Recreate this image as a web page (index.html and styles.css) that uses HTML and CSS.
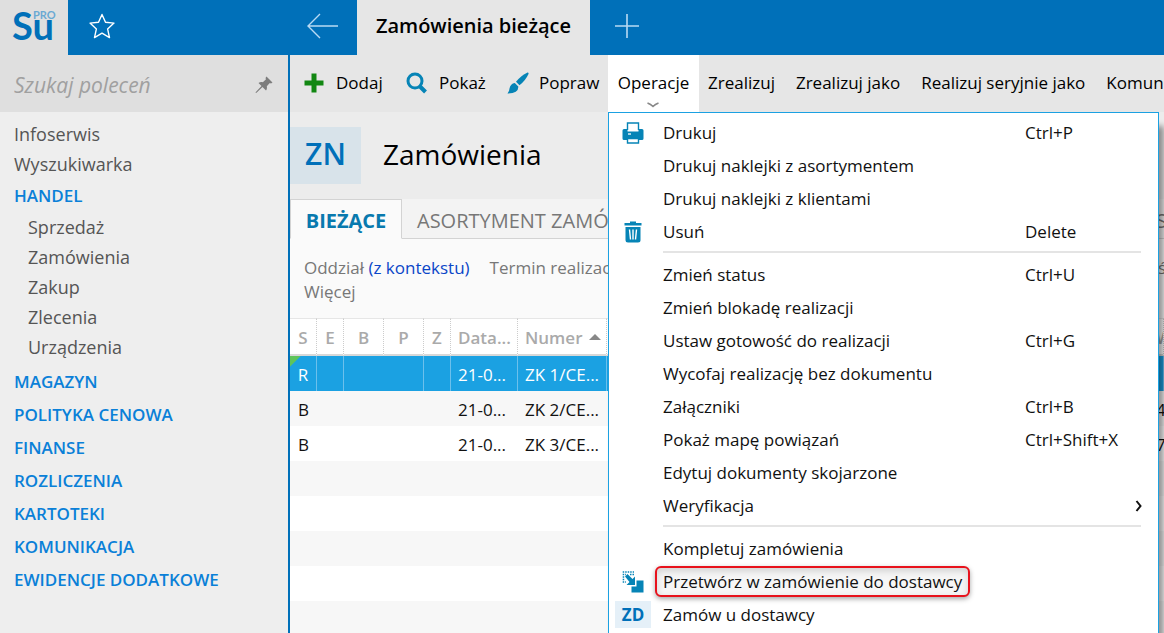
FILE: index.html
```html
<!DOCTYPE html>
<html lang="pl">
<head>
<meta charset="utf-8">
<title>Zamówienia bieżące</title>
<link rel="stylesheet" href="styles.css">
</head>
<body>
<div class="app">
  <header class="topbar">
    <div class="logo"><span class="logo-name">Su</span><span class="logo-edition">PRO</span></div>
    <button class="icon-btn favourites" aria-label="Ulubione">
      <svg width="26" height="26" viewBox="0 0 26 26" fill="none" stroke="#fff" stroke-width="1.4" stroke-linejoin="round"><path d="M13 1.500L16.500 9.300L25 10.100L18.600 15.900L20.500 24.600L13 20.200L5.500 24.600L7.400 15.900L1 10.100L9.500 9.300Z"/></svg>
    </button>
    <button class="icon-btn back" aria-label="Wstecz">
      <svg width="32" height="26" viewBox="0 0 32 26" fill="none" stroke="#b8daf3" stroke-width="1.400"><path d="M31 13H1M13 1L1 13L13 25"/></svg>
    </button>
    <button class="doc-tab">Zamówienia bieżące</button>
    <button class="icon-btn new-tab" aria-label="Nowa karta">
      <svg width="24" height="24" viewBox="0 0 24 24" fill="none" stroke="#b8daf3" stroke-width="1.600"><path d="M12 0V24M0 12H24"/></svg>
    </button>
  </header>

  <div class="body">
    <aside class="sidebar">
      <div class="search">
        <input class="search-input" type="text" placeholder="Szukaj poleceń" aria-label="Szukaj poleceń">
        <button class="icon-btn" aria-label="Przypnij">
          <svg width="18" height="18" viewBox="0 0 18 18" fill="#7d7d7d"><path d="M11.500 0.500L17.500 6.500L16 7.500L14.800 7L11.800 10.200C12.200 12 11.800 13.500 11 14.500L7.500 11L1.500 16.800L0.500 17L0.900 16L6.500 10L3.500 7C4.800 6 6.200 5.800 7.800 6.200L11 3.200L10.500 2Z"/></svg>
        </button>
      </div>
      <nav class="nav">
        <a class="nav-item" href="#">Infoserwis</a>
        <a class="nav-item" href="#">Wyszukiwarka</a>
        <a class="nav-section" href="#">HANDEL</a>
        <div class="nav-sub">
          <a href="#">Sprzedaż</a>
          <a href="#">Zamówienia</a>
          <a href="#">Zakup</a>
          <a href="#">Zlecenia</a>
          <a href="#">Urządzenia</a>
        </div>
        <a class="nav-section" href="#">MAGAZYN</a>
        <a class="nav-section" href="#">POLITYKA CENOWA</a>
        <a class="nav-section" href="#">FINANSE</a>
        <a class="nav-section" href="#">ROZLICZENIA</a>
        <a class="nav-section" href="#">KARTOTEKI</a>
        <a class="nav-section" href="#">KOMUNIKACJA</a>
        <a class="nav-section" href="#">EWIDENCJE DODATKOWE</a>
      </nav>
    </aside>

    <main class="main">
      <div class="toolbar">
        <button class="tool tool-add">
          <svg width="20" height="20" viewBox="0 0 20 20" fill="#128712"><path d="M7.500 0.500H12.500V7.500H19.500V12.500H12.500V19.500H7.500V12.500H0.500V7.500H7.500Z"/></svg>
          Dodaj</button>
        <button class="tool tool-show">
          <svg width="22" height="22" viewBox="0 0 22 22" fill="none" stroke="#0684b6"><circle cx="9" cy="9" r="7" stroke-width="3"/><path d="M14 14.500L19.500 20" stroke-width="4"/></svg>
          Pokaż</button>
        <button class="tool tool-edit">
          <svg width="22" height="22" viewBox="0 0 22 22" fill="#0684b6"><path d="M20.500 0.500Q22 0.300 21.500 2Q18.500 8.500 12.500 13.300L9 9.800Q14 3.500 20.500 0.500Z"/><path d="M7.800 11L11.300 14.500Q11.800 21.500 0.500 21.500Q2.300 19.500 2.500 16.500Q3.500 11.500 7.800 11Z"/></svg>
          Popraw</button>
        <div class="menu-anchor">
          <button class="tool tool-open" aria-expanded="true">Operacje
            <svg class="caret" width="12" height="6" viewBox="0 0 12 6" fill="none" stroke="#888" stroke-width="1.500"><path d="M0.500 1C3 2 5 3.500 6 4.500C7 3.500 9 2 11.500 1"/></svg>
          </button>
          <div class="menu" role="menu">
            <button class="menu-item" role="menuitem">
              <span class="menu-icon"><svg width="22" height="22" viewBox="0 0 22 22"><path d="M5.500 8V1H16.500V8" fill="#fff" stroke="#0684b6" stroke-width="1.400"/><path d="M2 7H5.500V9.500H16.500V7H20Q21.500 7 21.500 8.500V16.500Q21.500 18 20 18H2Q0.500 18 0.500 16.500V8.500Q0.500 7 2 7Z" fill="#0684b6"/><path d="M6 12H9" stroke="#fff" stroke-width="1.300"/><path d="M5.500 16.500H16.500V21H5.500Z" fill="#fff" stroke="#0684b6" stroke-width="1.400"/></svg></span>
              <span>Drukuj</span><kbd>Ctrl+P</kbd></button>
            <button class="menu-item" role="menuitem"><span class="menu-icon"></span><span>Drukuj naklejki z asortymentem</span></button>
            <button class="menu-item" role="menuitem"><span class="menu-icon"></span><span>Drukuj naklejki z klientami</span></button>
            <button class="menu-item" role="menuitem">
              <span class="menu-icon"><svg width="18" height="22" viewBox="0 0 18 22" fill="#0684b6"><path d="M6 0.500H12V2H17.500V4.500H0.500V2H6Z"/><path d="M1.500 6H16.500V19Q16.500 21.500 14 21.500H4Q1.500 21.500 1.500 19Z"/><path d="M5.500 8.500L6.500 18.500M9 8.500V18.500M12.500 8.500L11.500 18.500" stroke="#fff" stroke-width="1.400"/></svg></span>
              <span>Usuń</span><kbd>Delete</kbd></button>
            <hr class="menu-line">
            <button class="menu-item" role="menuitem"><span class="menu-icon"></span><span>Zmień status</span><kbd>Ctrl+U</kbd></button>
            <button class="menu-item" role="menuitem"><span class="menu-icon"></span><span>Zmień blokadę realizacji</span></button>
            <button class="menu-item" role="menuitem"><span class="menu-icon"></span><span>Ustaw gotowość do realizacji</span><kbd>Ctrl+G</kbd></button>
            <button class="menu-item" role="menuitem"><span class="menu-icon"></span><span>Wycofaj realizację bez dokumentu</span></button>
            <button class="menu-item" role="menuitem"><span class="menu-icon"></span><span>Załączniki</span><kbd>Ctrl+B</kbd></button>
            <button class="menu-item" role="menuitem"><span class="menu-icon"></span><span>Pokaż mapę powiązań</span><kbd>Ctrl+Shift+X</kbd></button>
            <button class="menu-item" role="menuitem"><span class="menu-icon"></span><span>Edytuj dokumenty skojarzone</span></button>
            <button class="menu-item" role="menuitem"><span class="menu-icon"></span><span>Weryfikacja</span><svg class="submenu-arrow" width="8" height="12" viewBox="0 0 8 12" fill="none" stroke="#111" stroke-width="2"><path d="M1.500 1L5.500 6L1.500 11"/></svg></button>
            <hr class="menu-line">
            <button class="menu-item" role="menuitem"><span class="menu-icon"></span><span>Kompletuj zamówienia</span></button>
            <button class="menu-item" role="menuitem">
              <span class="menu-icon"><svg width="22" height="22" viewBox="0 0 22 22" fill="#0684b6"><path d="M14.500 9.500H21.500V21.500H9.500V15.500H14.500Z"/><path d="M3 5.500L5.500 3L10.500 8L13 5.500V14H4.500L7.500 11Z"/><path d="M0.700 1H12M0.700 3.500H4M8 3.500H12M0.700 6H3M0.700 8.500H3M0.700 11H4" stroke="#0684b6" stroke-width="1.500" stroke-dasharray="1.500 1"/></svg></span>
              <span class="marked">Przetwórz w zamówienie do dostawcy</span></button>
            <button class="menu-item" role="menuitem"><span class="menu-icon"><b class="doc-code">ZD</b></span><span>Zamów u dostawcy</span></button>
          </div>
        </div>
        <button class="tool tool-text">Zrealizuj</button>
        <button class="tool tool-text">Zrealizuj jako</button>
        <button class="tool tool-text">Realizuj seryjnie jako</button>
        <button class="tool tool-text">Komunikacja</button>
      </div>

      <div class="heading">
        <div class="heading-code">ZN</div>
        <h1>Zamówienia</h1>
      </div>

      <div class="tabs" role="tablist">
        <button class="tab tab-active" role="tab" aria-selected="true">BIEŻĄCE</button>
        <button class="tab tab-wide" role="tab">ASORTYMENT ZAMÓWIEŃ</button>
        <button class="tab tab-edge" role="tab">SZ</button>
      </div>

      <div class="filters">
        <div class="filter-row">
          <span>Oddział <a href="#">(z kontekstu)</a></span>
          <span>Termin realizacji</span>
          <span class="filter-edge">ś</span>
        </div>
        <div class="filter-row"><span>Więcej</span></div>
      </div>

      <div class="grid">
        <table class="orders">
          <colgroup><col class="w-s"><col class="w-s"><col class="w-m"><col class="w-m"><col class="w-s"><col class="w-date"><col class="w-no"><col><col class="w-last"></colgroup>
          <thead>
            <tr><th>S</th><th>E</th><th>B</th><th>P</th><th>Z</th><th class="left">Data...</th><th class="left">Numer <span class="sort"></span></th><th></th><th class="left">W</th></tr>
          </thead>
          <tbody>
            <tr class="selected"><td>R</td><td></td><td class="no-line"></td><td></td><td></td><td class="left">21-0...</td><td class="left">ZK 1/CE...</td><td></td><td></td></tr>
            <tr><td>B</td><td></td><td></td><td></td><td></td><td class="left">21-0...</td><td class="left">ZK 2/CE...</td><td></td><td class="left">4</td></tr>
            <tr><td>B</td><td></td><td></td><td></td><td></td><td class="left">21-0...</td><td class="left">ZK 3/CE...</td><td></td><td class="left">7</td></tr>
          </tbody>
        </table>
      </div>
    </main>
  </div>
</div>
</body>
</html>
```
FILE: styles.css
```css
* { box-sizing: border-box; }

body {
  margin: 0;
  overflow: hidden;
  font-family: "Open Sans", "Noto Sans", sans-serif;
  font-size: 17px;
  color: #111;
}

button, input {
  font: inherit;
  color: inherit;
  border: 0;
  padding: 0;
  background: none;
}

a { text-decoration: none; color: inherit; }
svg { display: block; flex: none; }

.app {
  display: flex;
  flex-direction: column;
  height: 100vh;
  overflow: hidden;
}

.icon-btn { display: flex; align-items: center; }

/* Top bar */
.topbar {
  display: flex;
  flex: none;
  height: 55px;
  background: #0070b9;
}

.logo {
  display: flex;
  width: 68px;
  padding: 5px 0 0 12px;
  background: #dfdfdf;
  font-family: Lato, sans-serif;
  font-weight: 700;
}

.logo-name { font-size: 38px; line-height: 40px; color: #0070b9; }

.logo-edition {
  margin-left: -21px;
  padding-top: 4px;
  font-size: 11px;
  line-height: 12px;
  color: #6aa9d3;
}

.favourites { width: 220px; padding: 0 0 4px 21px; }
.back { width: 69px; padding: 0 0 3px 19px; }
.new-tab { padding: 0 0 3px 25px; }

.doc-tab {
  width: 233px;
  padding-bottom: 4px;
  background: #e6e6e6;
  font-size: 20px;
  font-weight: 600;
  color: #000;
}

.body {
  display: flex;
  flex: 1;
  min-height: 0;
}

/* Sidebar */
.sidebar {
  flex: none;
  width: 290px;
  border-right: 2px solid #0070b9;
  background: #eee;
}

.search {
  display: flex;
  align-items: center;
  height: 57px;
  padding: 2px 15px 0 14px;
  background: #dfdfdf;
}

.search-input {
  flex: 1;
  min-width: 0;
  font-size: 21px;
  font-style: italic;
  outline: 0;
}

.search-input::placeholder { color: #a0a0a0; opacity: 1; }

.nav {
  display: flex;
  flex-direction: column;
  padding: 7px 14px;
}

.nav-item { font-size: 18px; line-height: 30px; color: #555; }
.nav-section { font-weight: 600; line-height: 33px; color: #0a80d8; }

.nav-sub {
  display: flex;
  flex-direction: column;
  padding: 0 0 3px 14px;
  font-size: 18px;
  line-height: 30px;
  color: #555;
}

/* Toolbar */
.main {
  display: flex;
  flex: 1;
  flex-direction: column;
  min-width: 0;
  background: #fafafa;
}

.toolbar {
  display: flex;
  flex: none;
  height: 57px;
  background: #e6e6e6;
}

.tool {
  display: flex;
  flex: none;
  align-items: center;
  padding-bottom: 2px;
  color: #000;
}

.tool-add { width: 116px; padding-left: 14px; gap: 12px; }
.tool-show { width: 101px; gap: 11px; }
.tool-edit { width: 101px; gap: 10px; }
.tool-text { padding-left: 9px; padding-right: 12px; }

.menu-anchor { position: relative; display: flex; flex: none; width: 91px; }

.tool-open {
  position: relative;
  width: 100%;
  justify-content: center;
  background: #fff;
}

.caret { position: absolute; bottom: 4px; left: 39px; }

/* Operations menu */
.menu {
  position: absolute;
  top: 57px;
  left: 0;
  z-index: 2;
  width: 551px;
  height: calc(100vh - 112px);
  padding-top: 3px;
  border: 1px solid #1ba1e2;
  border-bottom: 0;
  background: #fff;
  box-shadow: 5px 14px 6px rgba(0, 0, 0, 0.4);
}

.menu-item {
  display: grid;
  grid-template-columns: 54px 362px 1fr 28px;
  align-items: center;
  width: 100%;
  height: 33px;
  text-align: left;
  white-space: nowrap;
}

.menu-item kbd { font: inherit; }

.menu-icon {
  display: flex;
  justify-content: center;
  width: 48px;
}

.menu-line {
  height: 2px;
  margin: 3px 17px 5px 54px;
  border: 0;
  background: #e4e4e4;
}

.submenu-arrow { grid-column: 4; margin-left: 5px; }

.marked {
  justify-self: start;
  margin: 0 -8px;
  padding: 0 6px;
  border: 2px solid #e8121c;
  border-radius: 6px;
  line-height: 27px;
  background: #f6f6f6;
  box-shadow: 0 2px 5px rgba(0, 0, 0, 0.35), inset 0 3px 7px rgba(0, 0, 0, 0.15);
}

.doc-code {
  width: 36px;
  background: #e5f0f8;
  line-height: 27px;
  text-align: center;
  color: #0070b9;
}

/* Heading */
.heading {
  display: flex;
  flex: none;
  align-items: center;
  height: 87px;
  background: #ececec;
}

.heading-code {
  width: 71px;
  height: 57px;
  margin-right: 22px;
  background: #d8e3ea;
  font-size: 30px;
  font-weight: 600;
  line-height: 54px;
  text-align: center;
  color: #0070b9;
}

.heading h1 {
  margin: 0;
  padding-bottom: 3px;
  font-size: 28px;
  font-weight: 400;
  color: #000;
}

/* View tabs */
.tabs {
  display: flex;
  flex: none;
  height: 40px;
  background: #f3f3f3;
}

.tab {
  padding: 3px 15px 0;
  border-bottom: 1px solid #d3d3d3;
  font-size: 20px;
  color: #777;
}

.tab-wide { flex: 1; text-align: left; }

.tab-edge {
  width: 8px;
  padding: 3px 0 0;
  overflow: hidden;
  text-align: left;
  white-space: nowrap;
}

.tab-active {
  width: 112px;
  padding: 3px 0 0;
  border: 1px solid #d3d3d3;
  border-bottom-color: #fafafa;
  background: #fafafa;
  font-weight: 700;
  color: #0879ae;
}

.filters {
  flex: none;
  height: 79px;
  padding: 17px 0 0 14px;
  line-height: 24px;
  color: #777;
}

.filter-row { display: flex; gap: 20px; white-space: nowrap; }
.filter-edge { width: 6px; margin-left: auto; overflow: hidden; }
.filters a { color: #0a46c8; }

/* Orders table */
.grid {
  flex: 1;
  overflow: hidden;
  background: repeating-linear-gradient(#fff 0 35px, #f7f7f7 35px 70px) 0 38px;
}

.orders {
  width: 100%;
  border-collapse: separate;
  border-spacing: 0;
  table-layout: fixed;
}

.w-s { width: 27px; }
.w-m { width: 40px; }
.w-date { width: 67px; }
.w-no { width: 89px; }
.w-last { width: 8px; }

.orders th, .orders td {
  padding: 0;
  overflow: hidden;
  text-align: center;
  white-space: nowrap;
}

.orders th {
  height: 38px;
  padding-top: 2px;
  border-top: 1px solid #e6e6e6;
  border-bottom: 2px solid #d8d8d8;
  border-right: 1px dotted #ccc;
  background: #fff;
  font-weight: 600;
  color: #aaa;
}

.orders td { height: 35px; padding-top: 2px; }
.orders th.left, .orders td.left { padding-left: 7px; text-align: left; }
.orders th:last-child, .orders td:last-child { padding-left: 0; }

.sort {
  display: inline-block;
  margin-left: 2px;
  vertical-align: 4px;
  border: 6px solid transparent;
  border-top: 0;
  border-bottom-color: #888;
}

.selected { background: #1ba1e2; color: #fff; }
.selected td { border-right: 1px solid #6cc0ec; }
.selected .no-line { border-right: 0; }
.selected td:first-child { background: linear-gradient(135deg, #5fc45a 7px, transparent 8px); }
.orders tbody tr:nth-child(2) { background: #f7f7f7; }
```
